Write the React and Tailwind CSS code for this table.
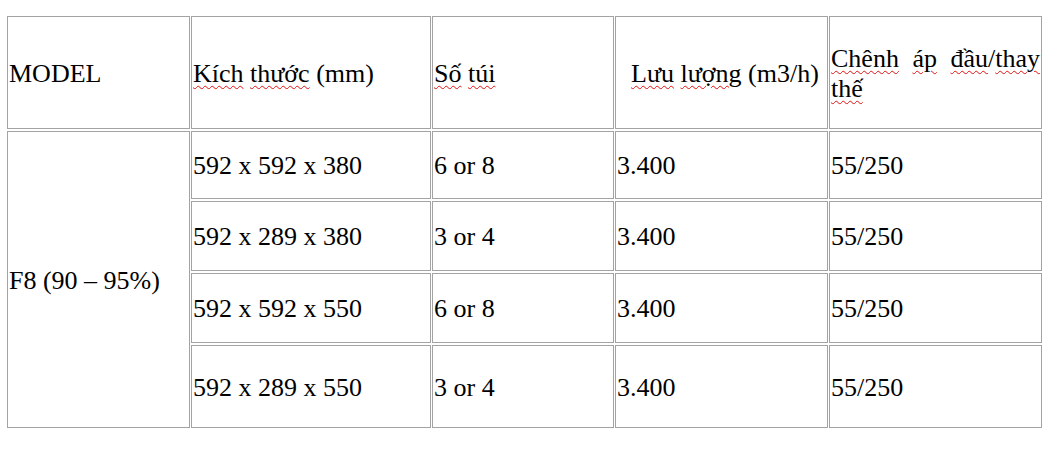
const rows = [
  { size: "592 x 592 x 380", bags: "6 or 8", flow: "3.400", dp: "55/250", h: "h-[68px]" },
  { size: "592 x 289 x 380", bags: "3 or 4", flow: "3.400", dp: "55/250", h: "h-[70px]" },
  { size: "592 x 592 x 550", bags: "6 or 8", flow: "3.400", dp: "55/250", h: "h-[70px]" },
  { size: "592 x 289 x 550", bags: "3 or 4", flow: "3.400", dp: "55/250", h: "h-[83px]" },
];

// gạch chân lỗi chính tả kiểu Word
const Sp = ({ children }) => (
  <span className="underline decoration-wavy decoration-[#e01010] decoration-1 underline-offset-[3px]">
    {children}
  </span>
);

const base = "border border-[#a3a3a3] px-[1px] pt-[2px] align-middle font-normal";
const cell = base + " text-left";

export default function App() {
  return (
    <div className="w-[1060px] h-[468px] bg-white pt-[14px] pl-[6px] text-black" style={{ fontFamily: '"Liberation Serif", "Times New Roman", serif' }}>
      <table className="table-fixed border-separate border-spacing-x-[1px] border-spacing-y-[2px] w-[1037px] text-[26px] leading-[30px]">
        <colgroup>
          <col className="w-[183px]" />
          <col className="w-[240px]" />
          <col className="w-[182px]" />
          <col className="w-[213px]" />
          <col className="w-[213px]" />
        </colgroup>
        <tbody>
          <tr className="h-[113px]">
            <td className={cell}>MODEL</td>
            <td className={cell}>
              <Sp>Kích</Sp> <Sp>thước</Sp> (mm)
            </td>
            <td className={cell}>
              <Sp>Số</Sp> <Sp>túi</Sp>
            </td>
            <td className={cell + " pl-[15px]"}>
              <Sp>Lưu</Sp> <Sp>lượng</Sp> (m3/h)
            </td>
            <td className={base + " text-justify"}>
              <Sp>Chênh</Sp> <Sp>áp</Sp> <Sp>đầu</Sp>/<Sp>thay</Sp> <Sp>thế</Sp>
            </td>
          </tr>
          {rows.map((r, i) => (
            <tr key={i} className={r.h}>
              {i === 0 && (
                <td rowSpan={4} className={cell}>
                  F8 (90 – 95%)
                </td>
              )}
              <td className={cell}>{r.size}</td>
              <td className={cell}>{r.bags}</td>
              <td className={cell}>{r.flow}</td>
              <td className={cell}>{r.dp}</td>
            </tr>
          ))}
        </tbody>
      </table>
    </div>
  );
}
